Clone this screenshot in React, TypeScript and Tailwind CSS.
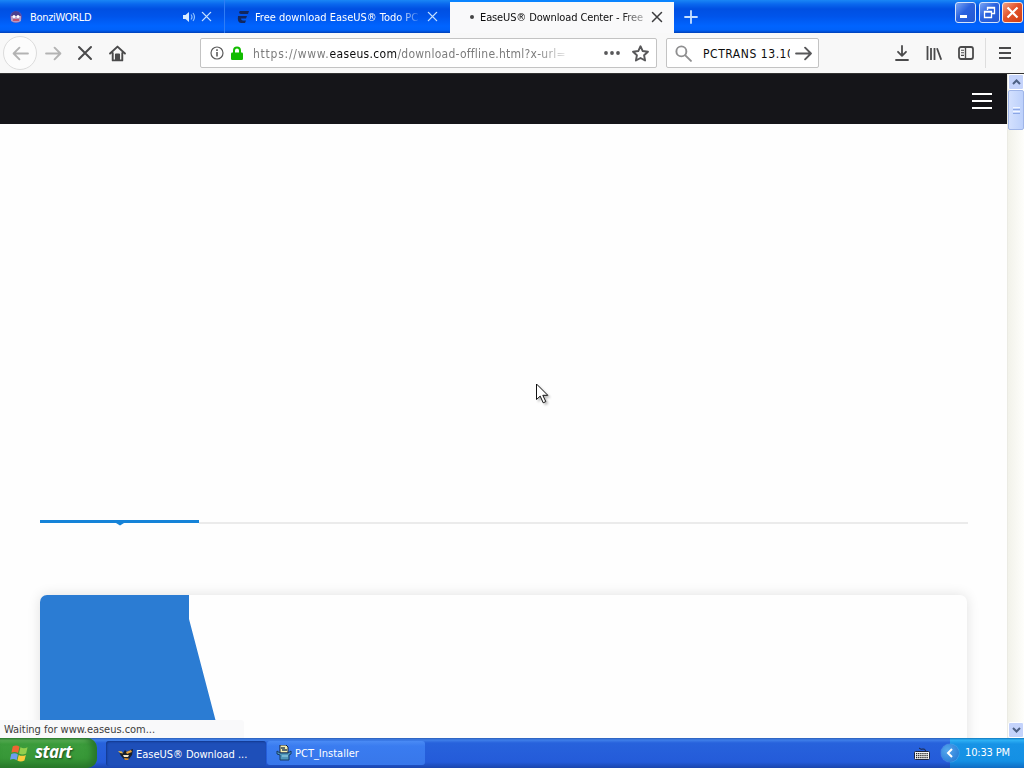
import type { ReactNode } from "react";

const Close = ({ className }: { className: string }) => (
  <svg viewBox="0 0 12 12" className={className} fill="none" stroke="currentColor" strokeWidth="1.5" strokeLinecap="round">
    <path d="M1.5 1.5l9 9M10.5 1.5l-9 9" />
  </svg>
);

const Stroke = ({ className, children }: { className: string; children: ReactNode }) => (
  <svg
    viewBox="0 0 16 16"
    className={className}
    fill="none"
    stroke="currentColor"
    strokeWidth="1.8"
    strokeLinecap="round"
    strokeLinejoin="round"
  >
    {children}
  </svg>
);

function TabStrip() {
  return (
    <div className="flex h-[33px] shrink-0 bg-[linear-gradient(to_bottom,#1a86f5_0,#0a68ee_4px,#0050e2_9px,#0054ea_16px,#0064ff_26px,#0062fa_30px,#0040b8_33px)] text-[11px] leading-[14px] text-white">
      <div className="flex w-[225px] items-center border-r border-[#2f7df5] pl-[9px]">
        <svg viewBox="0 0 14 14" className="h-[14px] w-[14px]">
          <circle cx="7" cy="7" r="6" fill="#5a50b8" />
          <path d="M2 6q5-7 10 0v5q-5 3-10 0z" fill="#b49ac4" />
          <path d="M3 3l3-2 4 1 2 4H2z" fill="#4a3f8e" />
          <circle cx="5" cy="6.5" r="1.5" fill="#fff" />
          <circle cx="9" cy="6.5" r="1.5" fill="#fff" />
          <path d="M4 10h6" stroke="#c33b55" strokeWidth="1.5" />
        </svg>
        <span className="ml-[7px] w-[152px] pt-[2px] tracking-[-0.33px]">BonziWORLD</span>
        <svg viewBox="0 0 14 14" className="h-[14px] w-[14px]" fill="none" stroke="#8fc2ff">
          <path d="M1 5h2.5L7 2v10L3.500 9H1z" fill="#d8ebff" stroke="none" />
          <path d="M9 4.500q2 2.500 0 5M11 3q3 4 0 8" strokeWidth="1.200" />
        </svg>
        <Close className="ml-[5px] h-[11px] w-[11px] text-[#c4e0ff]" />
      </div>
      <div className="flex w-[225px] items-center pl-[12px]">
        <svg viewBox="0 0 12 14" className="h-[14px] w-[12px]" fill="#12275e">
          <path d="M3 1h9l-1 3H4Q2 4 2 2zM1 6h9L9 8.500H4q0 2 2 2h3L8 13H4q-4 0-3-7z" />
        </svg>
        <span className="ml-[6px] w-[164px] overflow-hidden pt-[2px] whitespace-nowrap tracking-[-0.02px] [mask-image:linear-gradient(to_right,#000_143px,transparent_168px)]">
          Free download EaseUS® Todo PC
        </span>
        <Close className="ml-[8px] h-[11px] w-[11px] text-[#c4e0ff]" />
      </div>
      <div className="flex w-[224px] items-center border-t-2 border-[#0a84ff] bg-[#f9f9fa] pb-[1px] pl-[20px] text-[#0c0c0d]">
        <span className="h-[4px] w-[4px] rounded-full bg-[#444]" />
        <span className="ml-[6px] w-[165px] overflow-hidden pt-[2px] whitespace-nowrap tracking-[-0.12px] [mask-image:linear-gradient(to_right,#000_140px,transparent_175px)]">
          EaseUS® Download Center - Free
        </span>
        <Close className="ml-[6px] h-[12px] w-[12px] text-[#3c3c3e]" />
      </div>
      <div className="flex flex-1 items-center pl-[10px]">
        <svg viewBox="0 0 14 14" className="h-[14px] w-[14px]" stroke="#c7e0ff" strokeWidth="1.800" strokeLinecap="round">
          <path d="M7 1v12M1 7h12" />
        </svg>
      </div>
      <div className="flex gap-[2px] pt-[2px] pr-[1px]">
        <div className="h-[21px] w-[21px] rounded-[3px] border border-[#d5e4fb] bg-[linear-gradient(135deg,#7aa5f4,#2a62df_45%,#2358d2)]">
          <svg viewBox="0 0 19 19">
            <path d="M4 12h7v3H4z" fill="#fff" />
          </svg>
        </div>
        <div className="ml-[1px] h-[21px] w-[21px] rounded-[3px] border border-[#d5e4fb] bg-[linear-gradient(135deg,#7aa5f4,#2a62df_45%,#2358d2)]">
          <svg viewBox="0 0 19 19" fill="none" stroke="#fff">
            <path d="M7.500 7V4.500h7v6H12M7 5h8M4.500 8.500h7v6h-7zM4 9h8" strokeWidth="1.300" />
          </svg>
        </div>
        <div className="h-[21px] w-[21px] rounded-[3px] border border-[#fbe6dc] bg-[linear-gradient(135deg,#f2a184,#e2532b_45%,#cf3d12)]">
          <svg viewBox="0 0 19 19" stroke="#fff" strokeWidth="2.200">
            <path d="M4.500 4.500l10 10M14.500 4.500l-10 10" />
          </svg>
        </div>
      </div>
    </div>
  );
}

function Toolbar() {
  return (
    <div className="flex h-[41px] shrink-0 items-center border-b border-[#333] bg-[#f8f8f8] text-[12px] text-[#4a4a4b]">
      <div className="ml-[3px] flex h-[34px] w-[34px] items-center justify-center rounded-full border border-[#dcdcdc] bg-[#fcfcfc] text-[#b3b3b3]">
        <Stroke className="h-[17px] w-[17px]">
          <path d="M15 8H1.500M7 2.500L1.500 8 7 13.500" />
        </Stroke>
      </div>
      <Stroke className="ml-[8px] h-[17px] w-[17px] text-[#b3b3b3]">
        <path d="M1 8h13.500M9 2.500L14.500 8 9 13.500" />
      </Stroke>
      <Close className="ml-[15px] h-[16px] w-[16px]" />
      <Stroke className="ml-[16px] h-[17px] w-[17px]">
        <path d="M1 8l7-6.500L15 8M3.500 7.500v7h9v-7" />
        <path d="M6.500 14V9h3v5M8 10v4" />
      </Stroke>
      <div className="ml-[74px] flex h-[30px] w-[457px] items-center rounded-[2px] border border-[#c3c3c3] bg-white pl-[9px]">
        <svg viewBox="0 0 14 14" className="h-[14px] w-[14px]" fill="none" stroke="#5c5c5c" strokeWidth="1.200">
          <circle cx="7" cy="7" r="6" />
          <path d="M7 6v4.500M7 3.300v1.600" strokeWidth="1.600" />
        </svg>
        <svg viewBox="0 0 12 14" className="ml-[7px] h-[14px] w-[12px]">
          <path d="M3 7V4.500a3 3 0 016 0V7" fill="none" stroke="#12bc00" strokeWidth="2" />
          <rect y="6.500" width="12" height="7.500" rx="1.200" fill="#12bc00" />
        </svg>
        <span className="ml-[10px] w-[315px] overflow-hidden pt-[1px] text-[12px] tracking-[0.25px] whitespace-nowrap text-[#7c7c7c] [mask-image:linear-gradient(to_right,#000_285px,transparent_318px)]">
          <span className="tracking-[0.75px]">https://www.</span>
          <span className="tracking-[0.34px] text-[#0c0c0d]">easeus.com</span>/download-offline.html?x-url=
        </span>
        <svg viewBox="0 0 16 4" className="ml-[36px] h-[4px] w-[16px]" fill="#58585a">
          <circle cx="2" cy="2" r="1.900" />
          <circle cx="8" cy="2" r="1.900" />
          <circle cx="14" cy="2" r="1.900" />
        </svg>
        <Stroke className="ml-[12px] h-[17px] w-[17px] text-[#58585a]">
          <path d="M8 1.200l2.100 4.500 4.900.6-3.600 3.400.9 4.900L8 12.200l-4.300 2.400.9-4.900L1 6.300l4.900-.6z" />
        </Stroke>
      </div>
      <div className="ml-[9px] flex h-[30px] w-[153px] items-center rounded-[2px] border border-[#c3c3c3] bg-white pl-[8px]">
        <Stroke className="h-[17px] w-[17px] text-[#8f8f90]">
          <circle cx="6" cy="6" r="4.700" />
          <path d="M9.700 9.700l5.300 5.300" />
        </Stroke>
        <span className="ml-[11px] w-[87px] overflow-hidden pt-[1px] tracking-[0.55px] whitespace-nowrap text-[#0c0c0d]">PCTRANS 13.10</span>
        <Stroke className="ml-[5px] h-[17px] w-[17px] text-[#58585a]">
          <path d="M1 8h14M9.500 2.500L15 8l-5.500 5.500" />
        </Stroke>
      </div>
      <Stroke className="ml-[75px] h-[16px] w-[16px]">
        <path d="M8 1v9.500M4 6.800l4 4 4-4M2 15h12" />
      </Stroke>
      <svg viewBox="0 0 16 16" className="ml-[16px] h-[16px] w-[16px]" fill="none" stroke="currentColor" strokeWidth="1.800">
        <path d="M1.500 1v14M5 3v12M8.500 3v12M11 3.200l4.200 11.600" />
      </svg>
      <svg viewBox="0 0 16 14" className="ml-[16px] h-[14px] w-[16px]" fill="none" stroke="currentColor" strokeWidth="1.800">
        <rect x="1" y="1" width="14" height="12" rx="2" />
        <path d="M7.500 1v12" strokeWidth="1.400" />
        <path d="M3 4.200h3M3 6.800h3M3 9.400h3" strokeWidth="1.100" />
      </svg>
      <div className="ml-[11px] h-[30px] w-px bg-[#dedede]" />
      <svg viewBox="0 0 12 12" className="ml-[13px] h-[12px] w-[12px]" stroke="currentColor" strokeWidth="1.800">
        <path d="M0 1h12M0 6h12M0 11h12" />
      </svg>
    </div>
  );
}

function ScrollBar() {
  return (
    <div className="flex w-[17px] flex-col border-l border-[#ebebe4] bg-[linear-gradient(to_right,#f2f2ea,#fefefb)]">
      <div className="flex h-[16px] items-center justify-center rounded-[2px] border border-white bg-[#c4d3fb]">
        <svg viewBox="0 0 9 6" className="h-[6px] w-[9px]" fill="none" stroke="#4d6185" strokeWidth="2">
          <path d="M1 5l3.500-3.500L8 5" />
        </svg>
      </div>
      <div className="flex h-[40px] flex-col items-center justify-center gap-[1px] rounded-[2px] border border-[#9fb5e8] bg-[linear-gradient(to_right,#d3e0fe,#bcd0fb)]">
        <span className="h-px w-[7px] bg-[#f0f5ff]" />
        <span className="h-px w-[7px] bg-[#8ca7e6]" />
        <span className="h-px w-[7px] bg-[#f0f5ff]" />
        <span className="h-px w-[7px] bg-[#8ca7e6]" />
      </div>
      <div className="mt-auto flex h-[16px] items-center justify-center rounded-[2px] border border-white bg-[#c4d3fb]">
        <svg viewBox="0 0 9 6" className="h-[6px] w-[9px]" fill="none" stroke="#4d6185" strokeWidth="2">
          <path d="M1 1l3.500 3.500L8 1" />
        </svg>
      </div>
    </div>
  );
}

function Page() {
  return (
    <div className="relative flex min-h-0 flex-1 flex-col overflow-hidden bg-[#fefefe]">
      <div className="flex h-[50px] shrink-0 items-center justify-end bg-[#151519] pr-[15px]">
        <svg viewBox="0 0 20 16" className="mt-[4px] h-[16px] w-[20px]" stroke="#fff" strokeWidth="2">
          <path d="M0 1h20M0 8h20M0 15h20" />
        </svg>
      </div>

      {/* product tabs */}
      <div className="mt-[396px] mr-[39px] ml-[40px] flex h-[5px] shrink-0 items-start">
        <svg viewBox="0 0 159 6" className="h-[6px] w-[159px]" fill="#1583d8">
          <path d="M0 0h159v3H84l-4 2.500-4-2.500H0z" />
        </svg>
        <div className="mt-[2px] h-[2px] flex-1 bg-[#ebebeb]" />
      </div>

      {/* download card */}
      <div className="mt-[70px] mr-[40px] ml-[40px] h-[200px] shrink-0 overflow-hidden rounded-[7px] bg-[#fefefe] shadow-[0_0_13px_rgba(0,0,0,0.12)]">
        <svg viewBox="0 0 180 150" className="h-[150px] w-[180px]" fill="#2b7cd3">
          <path d="M0 0h149v24l33 126H0z" />
        </svg>
      </div>

      <div className="absolute bottom-0 left-0 h-[18px] w-[244px] rounded-tr-[3px] bg-[#f9f9fa] pl-[4px] text-[11px] leading-[20px] tracking-[-0.03px] whitespace-nowrap text-[#3c3c3c]">
        Waiting for www.easeus.com...
      </div>
    </div>
  );
}

function Taskbar() {
  return (
    <div className="flex h-[30px] shrink-0 bg-[linear-gradient(to_bottom,#2a5fb8_0,#3f7fe9_2px,#2762dc_5px,#245bd9_24px,#1a45ad_30px)] text-[11px] text-white">
      <div className="flex w-[97px] items-center rounded-r-[10px] bg-[linear-gradient(to_bottom,#2c7a35_0,#5cb358_2px,#3c9c3c_6px,#379737_20px,#287a2a_30px)] pl-[10px] shadow-[inset_-5px_0_6px_#28762a]">
        <svg viewBox="0 0 20 18" className="h-[18px] w-[19px]">
          <path d="M3 2q4-2 7 .5L8.500 9q-3-2-7-.5z" fill="#ee6533" />
          <path d="M11 3q3.500 2 7.500 0L17 9.500q-4 2-7.500 0z" fill="#93cf4d" />
          <path d="M1.300 10q4-1.500 7 .5L7 16.500Q4 14.500 0 16z" fill="#6d9df0" />
          <path d="M9.200 11q3.500 2 7.500 0l-1.500 6q-4 2-7.500 0z" fill="#fbcb3c" />
        </svg>
        <span className="ml-[6px] pb-[2px] font-['Open_Sans',sans-serif] text-[17px] leading-[22px] font-bold tracking-[-0.5px] italic [font-stretch:normal] [text-shadow:1px_1px_2px_#1d4d1d]">
          start
        </span>
      </div>
      <div className="mt-[3px] mb-[2px] ml-[9px] flex w-[160px] items-center rounded-[3px] bg-[#1e4fb9] pl-[12px] shadow-[inset_1px_1px_2px_#12388c]">
        <svg viewBox="0 0 16 16" className="h-[16px] w-[16px]">
          <path d="M1 6l4 1 2-3 2 2 3-2 3-1-1 6-3 4H6L3 10z" fill="#18202c" />
          <path d="M0 5l4 .5 1 2-3-.5z" fill="#e8b84e" />
          <path d="M8 6l5-2 1 2-5 2z" fill="#e5a33c" />
          <path d="M5 9h6l-1 2H6z" fill="#f7e8c8" />
          <path d="M6 12l5 .5-1 1.500H7z" fill="#d68927" />
        </svg>
        <span className="ml-[2px] pt-[3px] whitespace-nowrap tracking-[-0.03px]">EaseUS® Download ...</span>
      </div>
      <div className="mt-[3px] mb-[3px] ml-[1px] flex w-[158px] items-center rounded-[3px] bg-[linear-gradient(to_bottom,#4a8bf5,#3a7cf0_5px,#3877ea)] pb-[1px] pl-[9px]">
        <svg viewBox="0 0 16 16" className="h-[16px] w-[16px]">
          <path d="M4 0h6l2 2v6H4z" fill="#f3eeb0" stroke="#17233c" />
          <path d="M5 3h4M6 5h5" stroke="#2b4158" strokeWidth="1.300" />
          <path d="M1 6l3 2h8l3-2v3l-2 1v5H4v-5L1 9z" fill="#4f97bb" stroke="#173a62" />
          <path d="M6 11h6" stroke="#a5d8e8" />
        </svg>
        <span className="ml-[3px] pt-[3px] tracking-[0px]">PCT_Installer</span>
      </div>
      <div className="ml-auto flex items-center pr-[20px]">
        <svg viewBox="0 0 16 13" className="h-[13px] w-[16px]">
          <path d="M5 1q2 2 4 1t3 3" stroke="#1b2440" fill="none" />
          <rect x=".5" y="4.500" width="15" height="8" rx="1" fill="#f4f4f4" stroke="#1b2440" />
          <path d="M2 6.700h12M2 8.700h12M2 10.700h12" stroke="#222" strokeWidth="1.200" strokeDasharray="1.300 .8" />
        </svg>
      </div>
      <div className="flex w-[74px] items-center bg-[linear-gradient(to_bottom,#1177bd_0,#2fb2f5_2px,#1793e6_6px,#1490e4_23px,#0f6cc3_30px)]">
        <span className="-ml-[9px] flex h-[18px] w-[18px] shrink-0 items-center justify-center rounded-full bg-[radial-gradient(circle_at_35%_35%,#55a7ee,#1e73d0)] shadow-[0_0_1px_#bfe3ff]">
          <svg viewBox="0 0 8 10" className="h-[10px] w-[8px]" fill="none" stroke="#fff" strokeWidth="2">
            <path d="M6 1L2 5l4 4" />
          </svg>
        </span>
        <span className="ml-[6px] pt-[1px] whitespace-nowrap tracking-[-0.15px]">10:33 PM</span>
      </div>
    </div>
  );
}

export default function App() {
  return (
    <div className="relative flex h-[768px] w-[1024px] flex-col overflow-hidden bg-white font-['DejaVu_Sans_Condensed','DejaVu_Sans',sans-serif] [font-stretch:condensed]">
      <TabStrip />
      <Toolbar />
      <div className="flex min-h-0 flex-1">
        <Page />
        <ScrollBar />
      </div>
      <Taskbar />

      {/* mouse pointer */}
      <svg viewBox="0 0 13 21" className="absolute top-[383px] left-[536px] h-[21px] w-[13px] drop-shadow-[2px_2px_1px_rgba(0,0,0,0.25)]">
        <path d="M.5 1v15.500l3.700-3.400 3 6.700 2.600-1.200-3-6.300h5z" fill="#fff" stroke="#111" />
      </svg>
    </div>
  );
}
